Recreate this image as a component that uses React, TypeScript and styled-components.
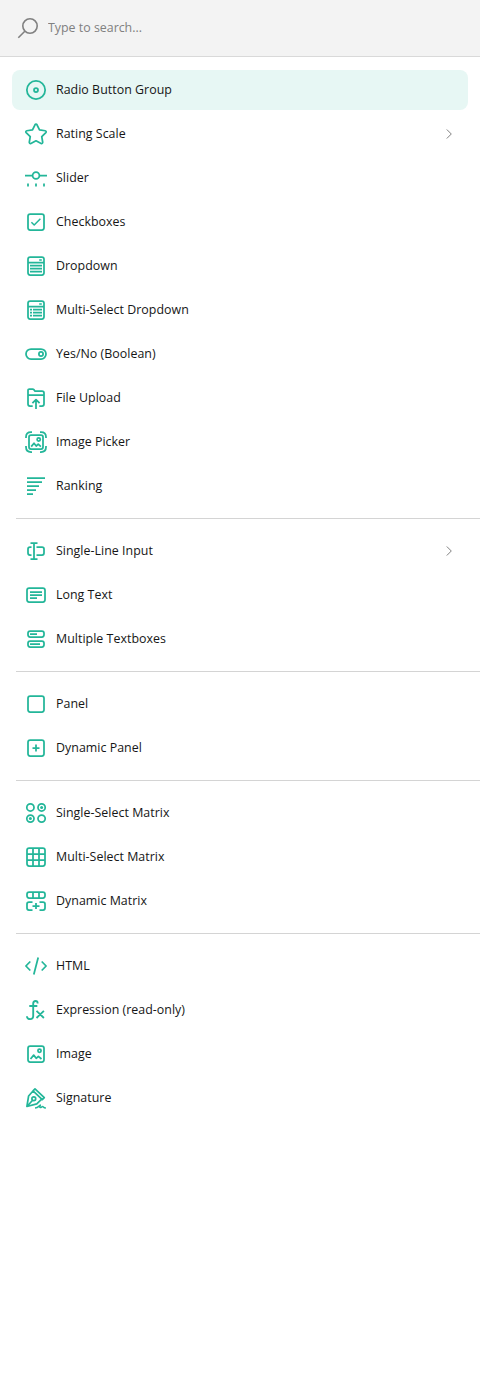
import React from "react";
import styled, { createGlobalStyle } from "styled-components";

const GlobalStyle = createGlobalStyle`
  * { box-sizing: border-box; }
  body { margin: 0; background: #fff; font-family: "Open Sans", sans-serif; }
`;

const Toolbox = styled.div`
  display: flex;
  flex-direction: column;
  width: 100%;
  min-height: 100vh;
  background: #fff;
`;

const SearchBar = styled.label`
  display: flex;
  align-items: center;
  gap: 8px;
  height: 57px;
  padding: 0 16px;
  background: #f3f3f3;
  border-bottom: 1px solid #d9d9d9;
`;

const SearchInput = styled.input`
  flex: 1;
  height: 24px;
  padding: 0;
  border: 0;
  outline: 0;
  background: transparent;
  color: #161616;
  font: 400 12.4px/24px "Open Sans", sans-serif;
  &::placeholder { color: #808080; opacity: 1; }
`;

const Content = styled.div`
  display: flex;
  flex-direction: column;
  padding-top: 13px;
`;

const Group = styled.ul`
  display: flex;
  flex-direction: column;
  gap: 4px;
  margin: 0;
  padding: 0 12px;
  list-style: none;
`;

const Separator = styled.div`
  height: 1px;
  margin: 12px 0 12px 16px;
  background: #d4d4d4;
`;

const Item = styled.li<{ $active?: boolean }>`
  display: flex;
  align-items: center;
  gap: 8px;
  height: 40px;
  padding: 0 8px 0 12px;
  border-radius: 8px;
  background: ${(p) => (p.$active ? "#e7f7f4" : "transparent")};
`;

const Title = styled.span`
  flex: 1;
  color: #161616;
  font-size: 12.4px;
  letter-spacing: 0.03px;
  line-height: 24px;
  white-space: nowrap;
`;

const Icon = styled.svg<{ $color?: string; $weight?: number }>`
  flex: none;
  width: 24px;
  height: 24px;
  overflow: visible;
  fill: none;
  stroke: ${(p) => p.$color ?? "#23b699"};
  stroke-width: ${(p) => p.$weight ?? 1.75};
  stroke-linecap: butt;
  stroke-linejoin: round;
`;

const icons: Record<string, React.ReactNode> = {
  radio: (<><circle cx="12" cy="12" r="9.15" /><circle cx="12" cy="12" r="2" /></>),
  rating: <path d="M12 2.2c.4 0 .8.25 1 .6l2.5 5.1 5.7.85c.95.15 1.3 1.2.65 1.9l-4.1 4 .95 5.6c.15.9-.8 1.6-1.6 1.2L12 18.8l-5.1 2.65c-.8.4-1.75-.3-1.6-1.2l.95-5.6-4.1-4c-.65-.7-.3-1.75.65-1.9l5.7-.85L11 2.8c.2-.35.6-.6 1-.6z" />,
  slider: (<><path d="M1 9.5h7.5M15.5 9.5H23M4 17.5v3M12 17.5v3M20 17.5v3" /><circle cx="12" cy="9.5" r="3.4" /></>),
  checkbox: (<><rect x="4" y="4" width="16" height="16" rx="2.2" /><path d="M7.4 12.2l2.8 2.8 6.2-6.2" strokeWidth="1.5" /></>),
  dropdown: (<><rect x="4" y="3" width="16" height="18" rx="2.2" /><path d="M4 8.6h16M15.2 6h2.6M6 11.6h12M6 14.6h12M6 17.6h12" strokeWidth="1.6" /></>),
  tagbox: (<><rect x="4" y="3" width="16" height="18" rx="2.2" /><path d="M4 8.6h16M15.2 6h2.6M6 11.6h2M9 11.6h9M6 14.6h2M9 14.6h9M6 17.6h2M9 17.6h9" strokeWidth="1.6" /></>),
  boolean: (<><rect x="2" y="7" width="20" height="10" rx="5" /><circle cx="17" cy="12" r="2.1" /></>),
  file: <path d="M8.7 20H6a2 2 0 0 1-2-2V4.5C4 3.7 4.6 3 5.4 3h3.2c.5 0 .9.2 1.2.6L10.8 5H18a2 2 0 0 1 2 2v11a2 2 0 0 1-2 2h-2.7M4 9h16M12 23V13.8M8.4 17.2L12 13.6l3.6 3.6" />,
  imagepicker: (<><rect x="5" y="5" width="14" height="14" rx="2" /><circle cx="14.7" cy="9.4" r="1.6" /><path d="M7.2 16.6L10 13.2l2.2 2.8 2-1.8 2.7 2.4M2 8V7c0-3 2-5 5-5h1M16 2h1c3 0 5 2 5 5v1M22 16v1c0 3-2 5-5 5h-1M8 22H7c-3 0-5-2-5-5v-1" /></>),
  ranking: <path d="M3 4h18M3 8h15M3 12h12M3 16h9M3 20h6" />,
  text: <path d="M10 4v16M6.5 4h7M6.5 20h7M7.5 8H6a2 2 0 0 0-2 2v4a2 2 0 0 0 2 2h1.5M12.5 8H18a2 2 0 0 1 2 2v4a2 2 0 0 1-2 2h-5.5" />,
  comment: (<><rect x="3" y="5" width="18" height="14" rx="2.2" /><path d="M6 9h12M6 12h12M6 15h7" /></>),
  multipletext: (<><rect x="4" y="4" width="16" height="6" rx="2.2" /><rect x="4" y="14" width="16" height="6" rx="2.2" /><path d="M6 7h7M6 17h10" /></>),
  panel: <rect x="4" y="4" width="16" height="16" rx="2.2" />,
  paneldynamic: (<><rect x="4" y="4" width="16" height="16" rx="2.2" /><path d="M12 8.5v7M8.5 12h7" /></>),
  matrix: (<><circle cx="6.4" cy="6.4" r="3.6" /><circle cx="17.6" cy="6.4" r="3.6" /><circle cx="6.4" cy="17.6" r="3.6" /><circle cx="17.6" cy="17.6" r="3.6" /><g fill="#23b699" stroke="none"><circle cx="17.6" cy="6.4" r="1.5" /><circle cx="6.4" cy="17.6" r="1.5" /></g></>),
  matrixdropdown: (<><rect x="3" y="3" width="18" height="18" rx="2.2" /><path d="M9 3v18M15 3v18M3 9h18M3 15h18" /></>),
  matrixdynamic: (<><rect x="3" y="3" width="18" height="6" rx="2.2" /><path d="M9 3v6M15 3v6M8.5 13H5a2 2 0 0 0-2 2v4a2 2 0 0 0 2 2h3.5M15.5 13H19a2 2 0 0 1 2 2v4a2 2 0 0 1-2 2h-3.5M12 14v6M8.5 17h7" /></>),
  html: <path d="M6.3 7.5L1.9 12l4.4 4.5M17.7 7.5l4.4 4.5-4.4 4.5M14.2 3.5L9.8 20.5" />,
  expression: <path d="M13.6 5.6V5c0-1.2-.8-2-2-2C10 3 9.2 4 9.2 5.6v12.3c0 2.1-1.1 3.3-3 3.3S3 20.2 3 18.8v-.5M5.3 8h8M12.5 12.8l7.4 7.2M19.9 12.8L12.5 20" strokeWidth="1.85" />,
  image: (<><rect x="4" y="4" width="16" height="16" rx="2.2" /><circle cx="15.5" cy="8.8" r="1.6" /><path d="M6.5 17l3.2-3.9 2.5 3.2 2.2-2 3.1 2.7" /></>),
  signature: (<g strokeWidth="1.7"><path d="M11 2.8l9.3 8.9-2 2L9 4.8zM9 5L4.6 10 2.9 20.5l9.9-2.6 4.6-4.6M3.2 20.2L8.4 14.5" /><circle cx="9.8" cy="12.8" r="1.9" /><path d="M11 21.9c2.7 0 4-1.8 5.4-2.8-.8 1.5-.8 2.5 0 2.5s1.4-1 2.3-1c.8 0 .5 1.3 3.2 1.3" strokeWidth="1.5" /></g>),
};

interface Entry { icon: string; title: string; active?: boolean; nested?: boolean }

const groups: Entry[][] = [
  [
    { icon: "radio", title: "Radio Button Group", active: true },
    { icon: "rating", title: "Rating Scale", nested: true },
    { icon: "slider", title: "Slider" },
    { icon: "checkbox", title: "Checkboxes" },
    { icon: "dropdown", title: "Dropdown" },
    { icon: "tagbox", title: "Multi-Select Dropdown" },
    { icon: "boolean", title: "Yes/No (Boolean)" },
    { icon: "file", title: "File Upload" },
    { icon: "imagepicker", title: "Image Picker" },
    { icon: "ranking", title: "Ranking" },
  ],
  [
    { icon: "text", title: "Single-Line Input", nested: true },
    { icon: "comment", title: "Long Text" },
    { icon: "multipletext", title: "Multiple Textboxes" },
  ],
  [
    { icon: "panel", title: "Panel" },
    { icon: "paneldynamic", title: "Dynamic Panel" },
  ],
  [
    { icon: "matrix", title: "Single-Select Matrix" },
    { icon: "matrixdropdown", title: "Multi-Select Matrix" },
    { icon: "matrixdynamic", title: "Dynamic Matrix" },
  ],
  [
    { icon: "html", title: "HTML" },
    { icon: "expression", title: "Expression (read-only)" },
    { icon: "image", title: "Image" },
    { icon: "signature", title: "Signature" },
  ],
];

export default function App() {
  return (
    <Toolbox>
      <GlobalStyle />
      <SearchBar>
        <Icon viewBox="0 0 24 24" $color="#808080" $weight={1.6}>
          <circle cx="14" cy="10" r="7.2" />
          <path d="M8.8 15.2L2.3 21.7" />
        </Icon>
        <SearchInput placeholder="Type to search..." />
      </SearchBar>
      <Content>
        {groups.map((group, index) => (
          <React.Fragment key={index}>
            {index > 0 && <Separator />}
            <Group>
              {group.map((entry) => (
                <Item key={entry.icon} $active={entry.active}>
                  <Icon viewBox="0 0 24 24">{icons[entry.icon]}</Icon>
                  <Title>{entry.title}</Title>
                  {entry.nested && (
                    <Icon viewBox="0 0 24 24" $color="#808080" $weight={1}>
                      <path d="M10.8 7.5l4.5 4.5-4.5 4.5" />
                    </Icon>
                  )}
                </Item>
              ))}
            </Group>
          </React.Fragment>
        ))}
      </Content>
    </Toolbox>
  );
}
